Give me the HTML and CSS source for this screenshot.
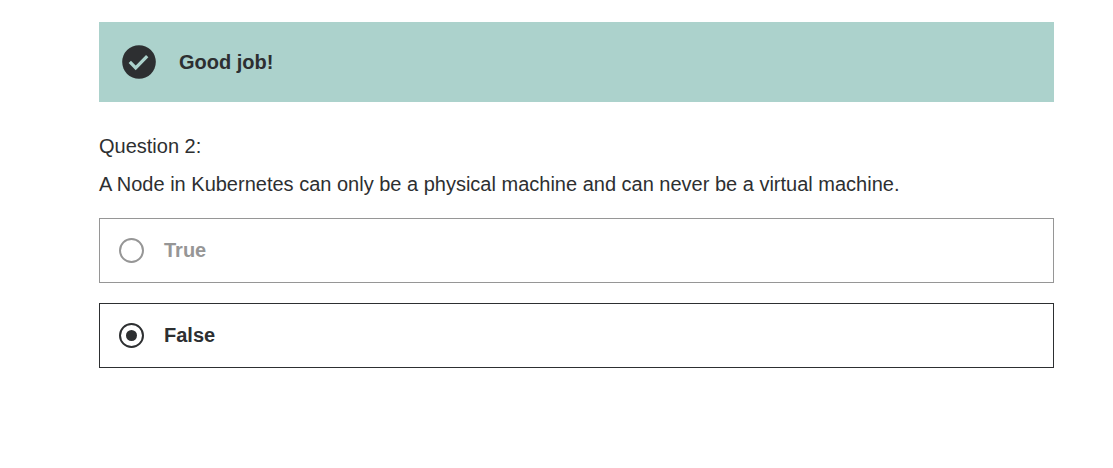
FILE: index.html
```html
<!DOCTYPE html>
<html lang="en">
<head>
<meta charset="utf-8">
<meta name="viewport" content="width=device-width, initial-scale=1">
<title>Quiz</title>
<link rel="stylesheet" href="styles.css">
</head>
<body>
<main class="quiz">
  <div class="banner" role="status">
    <svg class="banner-icon" viewBox="0 0 34 34" aria-hidden="true">
      <circle cx="17" cy="17" r="16.8" fill="#2d2f31"/>
      <path d="M7.8 16.8l5.9 6L25.2 11.2" fill="none" stroke="#acd2cc" stroke-width="3.3"/>
    </svg>
    <span class="banner-text">Good job!</span>
  </div>
  <form class="question">
    <p class="question-label">Question 2:</p>
    <p class="question-text" id="prompt">A Node in Kubernetes can only be a physical machine and can never be a virtual machine.</p>
    <div class="answers" role="radiogroup" aria-labelledby="prompt">
      <label class="answer answer-muted">
        <input class="answer-radio" type="radio" name="answer" value="true">
        <span>True</span>
      </label>
      <label class="answer">
        <input class="answer-radio" type="radio" name="answer" value="false" checked>
        <span>False</span>
      </label>
    </div>
  </form>
</main>
</body>
</html>
```

FILE: styles.css
```css
* { box-sizing: border-box; }

body {
  margin: 0;
  background: #fff;
  color: #2d2f31;
  font-family: "Liberation Sans", Arial, sans-serif;
  font-size: 20px;
  line-height: 28px;
}

.quiz { padding: 22px 59px 40px 99px; }

.banner {
  display: flex;
  align-items: center;
  gap: 23px;
  padding: 23px;
  background: #acd2cc;
  font-weight: 700;
}

.banner-icon { width: 34px; height: 34px; }

.question { margin-top: 30px; }

.question-label,
.question-text { margin: 0 0 10px; }

.question-text { margin-bottom: 20px; }

.answers {
  display: grid;
  gap: 20px;
}

.answer {
  display: flex;
  align-items: center;
  gap: 20px;
  padding: 19px;
  border: 1px solid #2d2f31;
  font-weight: 700;
  line-height: 25px;
}

.answer-muted {
  border-color: #969696;
  color: #969696;
}

.answer-radio {
  appearance: none;
  display: grid;
  place-items: center;
  width: 25px;
  height: 25px;
  margin: 0;
  border: 2px solid currentColor;
  border-radius: 50%;
  color: inherit;
}

.answer-radio:checked::before {
  content: "";
  width: 11px;
  height: 11px;
  border-radius: 50%;
  background: currentColor;
}
```
